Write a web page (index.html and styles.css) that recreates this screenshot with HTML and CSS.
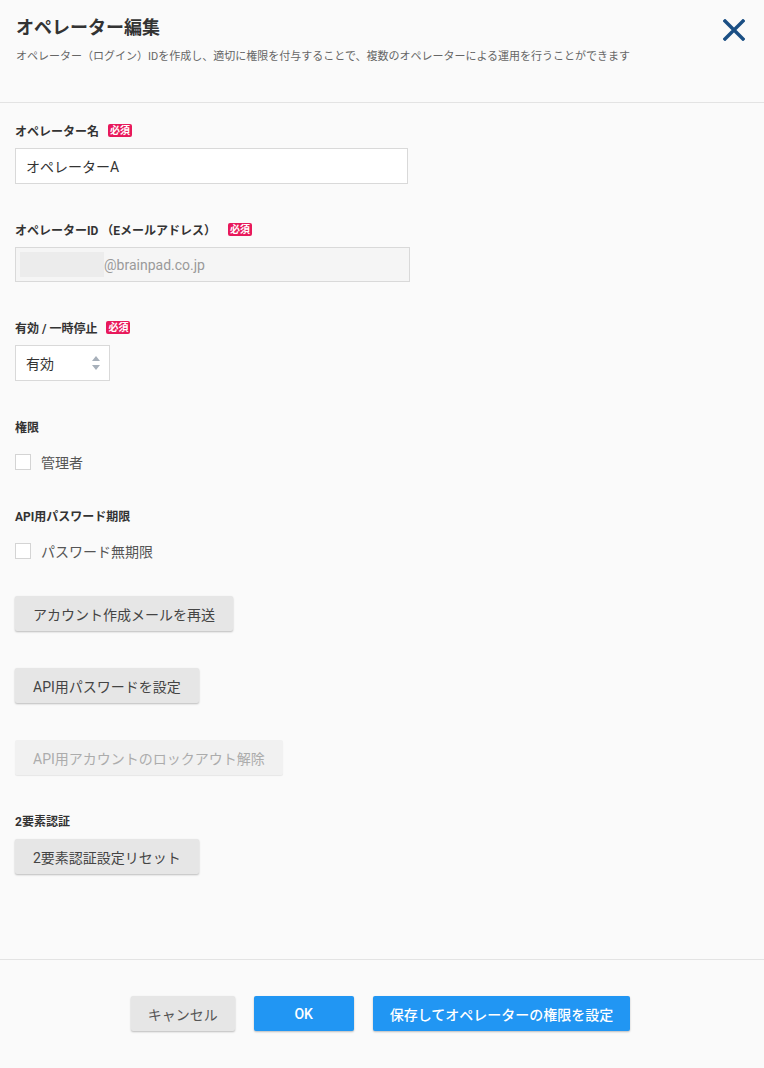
FILE: index.html
```html
<!DOCTYPE html>
<html lang="ja">
<head>
    <meta charset="UTF-8">
    <title>オペレーター編集</title>
    <link rel="stylesheet" href="styles.css">
</head>
<body>
<div class="modal">
    <div class="modal-header">
        <h1 class="modal-title">オペレーター編集</h1>
        <p class="modal-desc">オペレーター（ログイン）IDを作成し、適切に権限を付与することで、複数のオペレーターによる運用を行うことができます</p>
        <button class="close-btn" aria-label="閉じる">
            <svg width="22" height="22" viewBox="0 0 22 22">
                <path d="M2 2 L20 20 M20 2 L2 20" stroke="#1b4f84" stroke-width="3.4" stroke-linecap="square" fill="none"/>
            </svg>
        </button>
    </div>

    <div class="modal-body">
        <div class="form-group">
            <div class="label">オペレーター名<span class="badge">必須</span></div>
            <div class="input name-input">オペレーターA</div>
        </div>

        <div class="form-group">
            <div class="label">オペレーターID （Eメールアドレス）<span class="badge wide">必須</span></div>
            <div class="input mail-input"><span class="mask"></span>@brainpad.co.jp</div>
        </div>

        <div class="form-group">
            <div class="label">有効 / 一時停止<span class="badge">必須</span></div>
            <div class="select">
                <span>有効</span>
                <svg class="arrows" width="8" height="14" viewBox="0 0 8 14">
                    <path d="M4 0 L8 5 L0 5 Z M4 14 L8 9 L0 9 Z" fill="#a7b0ba"/>
                </svg>
            </div>
        </div>

        <div class="form-group">
            <div class="label">権限</div>
            <label class="check-row"><span class="checkbox"></span>管理者</label>
        </div>

        <div class="form-group">
            <div class="label">API用パスワード期限</div>
            <label class="check-row"><span class="checkbox"></span>パスワード無期限</label>
        </div>

        <div class="form-group">
            <button class="btn">アカウント作成メールを再送</button>
        </div>

        <div class="form-group">
            <button class="btn">API用パスワードを設定</button>
        </div>

        <div class="form-group">
            <button class="btn" disabled>API用アカウントのロックアウト解除</button>
        </div>

        <div class="form-group">
            <div class="label label-tight">2要素認証</div>
            <button class="btn">2要素認証設定リセット</button>
        </div>
    </div>

    <div class="modal-footer">
        <button class="btn">キャンセル</button>
        <button class="btn btn-primary btn-ok">OK</button>
        <button class="btn btn-primary">保存してオペレーターの権限を設定</button>
    </div>
</div>
</body>
</html>
```

FILE: styles.css
```css
html, body {
    margin: 0;
    padding: 0;
    background-color: #fafafa;
    color: #333;
    font-family: Roboto, "Noto Sans CJK JP", sans-serif;
}
.modal {
    display: flex;
    flex-direction: column;
    height: 100vh;
}
.modal-header {
    position: relative;
    padding: 15px 16px 37px;
    border-bottom: 1px solid #e3e3e3;
}
.modal-title {
    margin: 0;
    font-size: 18px;
    line-height: 26px;
    font-weight: bold;
    color: #333;
}
.modal-desc {
    margin: 8px 0 0;
    font-size: 11px;
    line-height: 16px;
    color: #666;
}
.close-btn {
    position: absolute;
    top: 19px;
    right: 19px;
    padding: 0;
    border: none;
    background: none;
    cursor: pointer;
}
.close-btn svg {
    display: block;
}
.modal-body {
    flex: 1;
    padding: 19px 15px 0;
}
.form-group {
    margin-bottom: 37px;
}
.label {
    display: flex;
    align-items: center;
    height: 16px;
    margin-bottom: 10px;
    font-size: 12px;
    font-weight: bold;
    color: #333;
}
.label-tight {
    margin-bottom: 11px;
}
.badge {
    display: inline-block;
    margin-left: 9px;
    padding: 0 2px;
    height: 13px;
    line-height: 13px;
    font-size: 10px;
    font-weight: bold;
    color: #fff;
    background-color: #e8195b;
    border-radius: 2px;
}
.badge.wide {
    margin-left: 12px;
}
.input {
    box-sizing: border-box;
    height: 36px;
    padding: 0 10px;
    display: flex;
    align-items: center;
    font-size: 14px;
    color: #333;
    background-color: #fff;
    border: 1px solid #d9d9d9;
}
.name-input {
    width: 393px;
}
.mail-input {
    width: 395px;
    height: 35px;
    padding: 0 4px;
    background-color: #f5f5f5;
    color: #9a9a9a;
}
.mask {
    display: inline-block;
    width: 84px;
    height: 25px;
    background-color: #ececec;
}
.select {
    box-sizing: border-box;
    width: 95px;
    height: 36px;
    padding: 0 9px 0 10px;
    display: flex;
    align-items: center;
    justify-content: space-between;
    font-size: 14px;
    color: #333;
    background-color: #fff;
    border: 1px solid #d9d9d9;
}
.check-row {
    display: flex;
    align-items: center;
    height: 16px;
    margin-top: 20px;
    font-size: 14px;
    color: #555;
}
.checkbox {
    box-sizing: border-box;
    width: 16px;
    height: 16px;
    margin-right: 10px;
    background-color: #fff;
    border: 1px solid #d4d4d4;
}
.btn {
    height: 35px;
    padding: 0 18px;
    font-family: inherit;
    font-size: 14px;
    color: #444;
    background-color: #e6e6e6;
    border: none;
    border-radius: 2px;
    box-shadow: 0 1px 2px rgba(0, 0, 0, 0.25);
    cursor: pointer;
}
.btn:disabled {
    color: #acacac;
    background-color: #f1f1f1;
    box-shadow: 0 1px 1px rgba(0, 0, 0, 0.08);
    cursor: default;
}
.modal-footer {
    display: flex;
    justify-content: center;
    gap: 19px;
    padding: 36px 3px 37px 0;
    border-top: 1px solid #e3e3e3;
}
.modal-footer .btn {
    padding: 0 17px;
    color: #555;
}
.modal-footer .btn-primary {
    color: #fff;
    background-color: #2196f3;
    font-weight: 500;
}
.btn-ok {
    width: 100px;
}
```
